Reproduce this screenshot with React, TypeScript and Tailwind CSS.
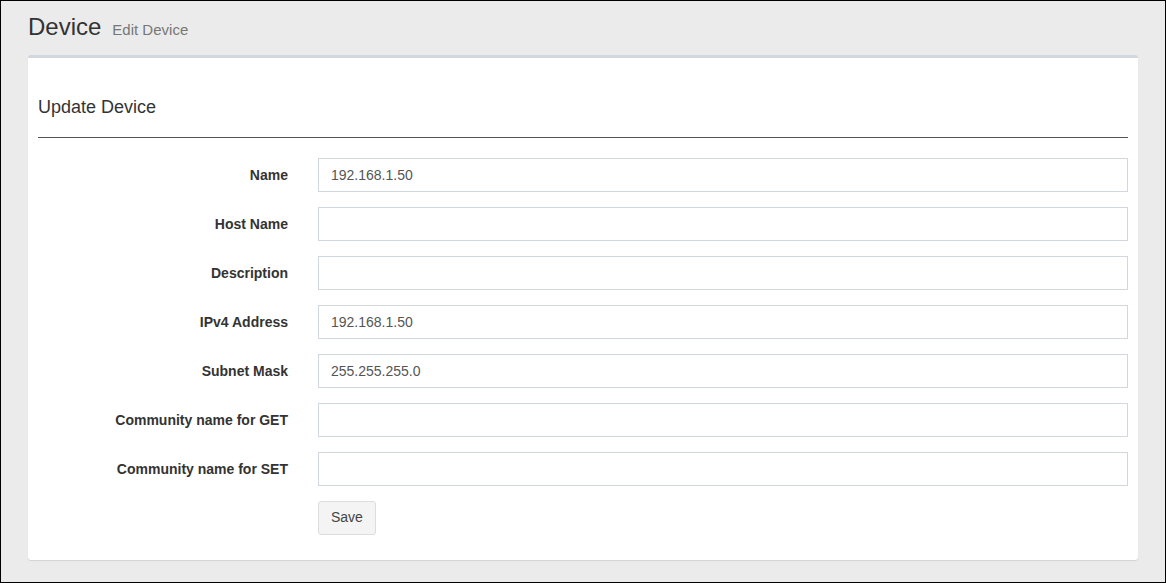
import { useState } from 'react'

const fields = [
  { label: 'Name', value: '192.168.1.50' },
  { label: 'Host Name', value: '' },
  { label: 'Description', value: '' },
  { label: 'IPv4 Address', value: '192.168.1.50' },
  { label: 'Subnet Mask', value: '255.255.255.0' },
  { label: 'Community name for GET', value: '' },
  { label: 'Community name for SET', value: '' },
]

export default function App() {
  const [values, setValues] = useState(fields.map(f => f.value))

  return (
    <div
      className="h-[583px] w-full border border-black bg-[#ebebeb] text-[#333] overflow-hidden"
      style={{ fontFamily: '"Liberation Sans", Arial, sans-serif' }}
    >
      {/* Header */}
      <div className="px-[27px] pt-[13px] flex items-baseline gap-[11px]">
        <h1 className="text-[24px] leading-[26px] text-[#333]">Device</h1>
        <span className="text-[15px] text-[#777]">Edit Device</span>
      </div>

      {/* Box */}
      <div className="mx-[27px] mt-[13px] bg-white border-t-[3px] border-[#d2d6de] rounded-[3px] shadow-[0_1px_1px_rgba(0,0,0,0.1)] px-[10px] pb-[25px]">
        <h3 className="pt-[39px] text-[18px] leading-[20px] text-[#333]">Update Device</h3>
        <hr className="mt-[20px] border-0 border-t border-[#555]" />

        <form className="mt-[20px] flex flex-col gap-[15px]" onSubmit={e => e.preventDefault()}>
          {fields.map((f, i) => (
            <div key={f.label} className="flex items-center">
              <label className="w-[250px] pt-[2px] text-right text-[14px] font-bold text-[#333] shrink-0">
                {f.label}
              </label>
              <div className="flex-1 pl-[30px]">
                <input
                  type="text"
                  value={values[i]}
                  onChange={e => {
                    const next = [...values]
                    next[i] = e.target.value
                    setValues(next)
                  }}
                  className="w-full h-[34px] px-[12px] border border-[#d2d6de] text-[14px] text-[#555] outline-none"
                />
              </div>
            </div>
          ))}
          <div className="flex">
            <div className="w-[250px] shrink-0" />
            <div className="pl-[30px]">
              <button
                type="submit"
                className="h-[34px] px-[12px] bg-[#f4f4f4] border border-[#ddd] rounded-[3px] text-[14px] text-[#444]"
              >
                Save
              </button>
            </div>
          </div>
        </form>
      </div>
    </div>
  )
}
